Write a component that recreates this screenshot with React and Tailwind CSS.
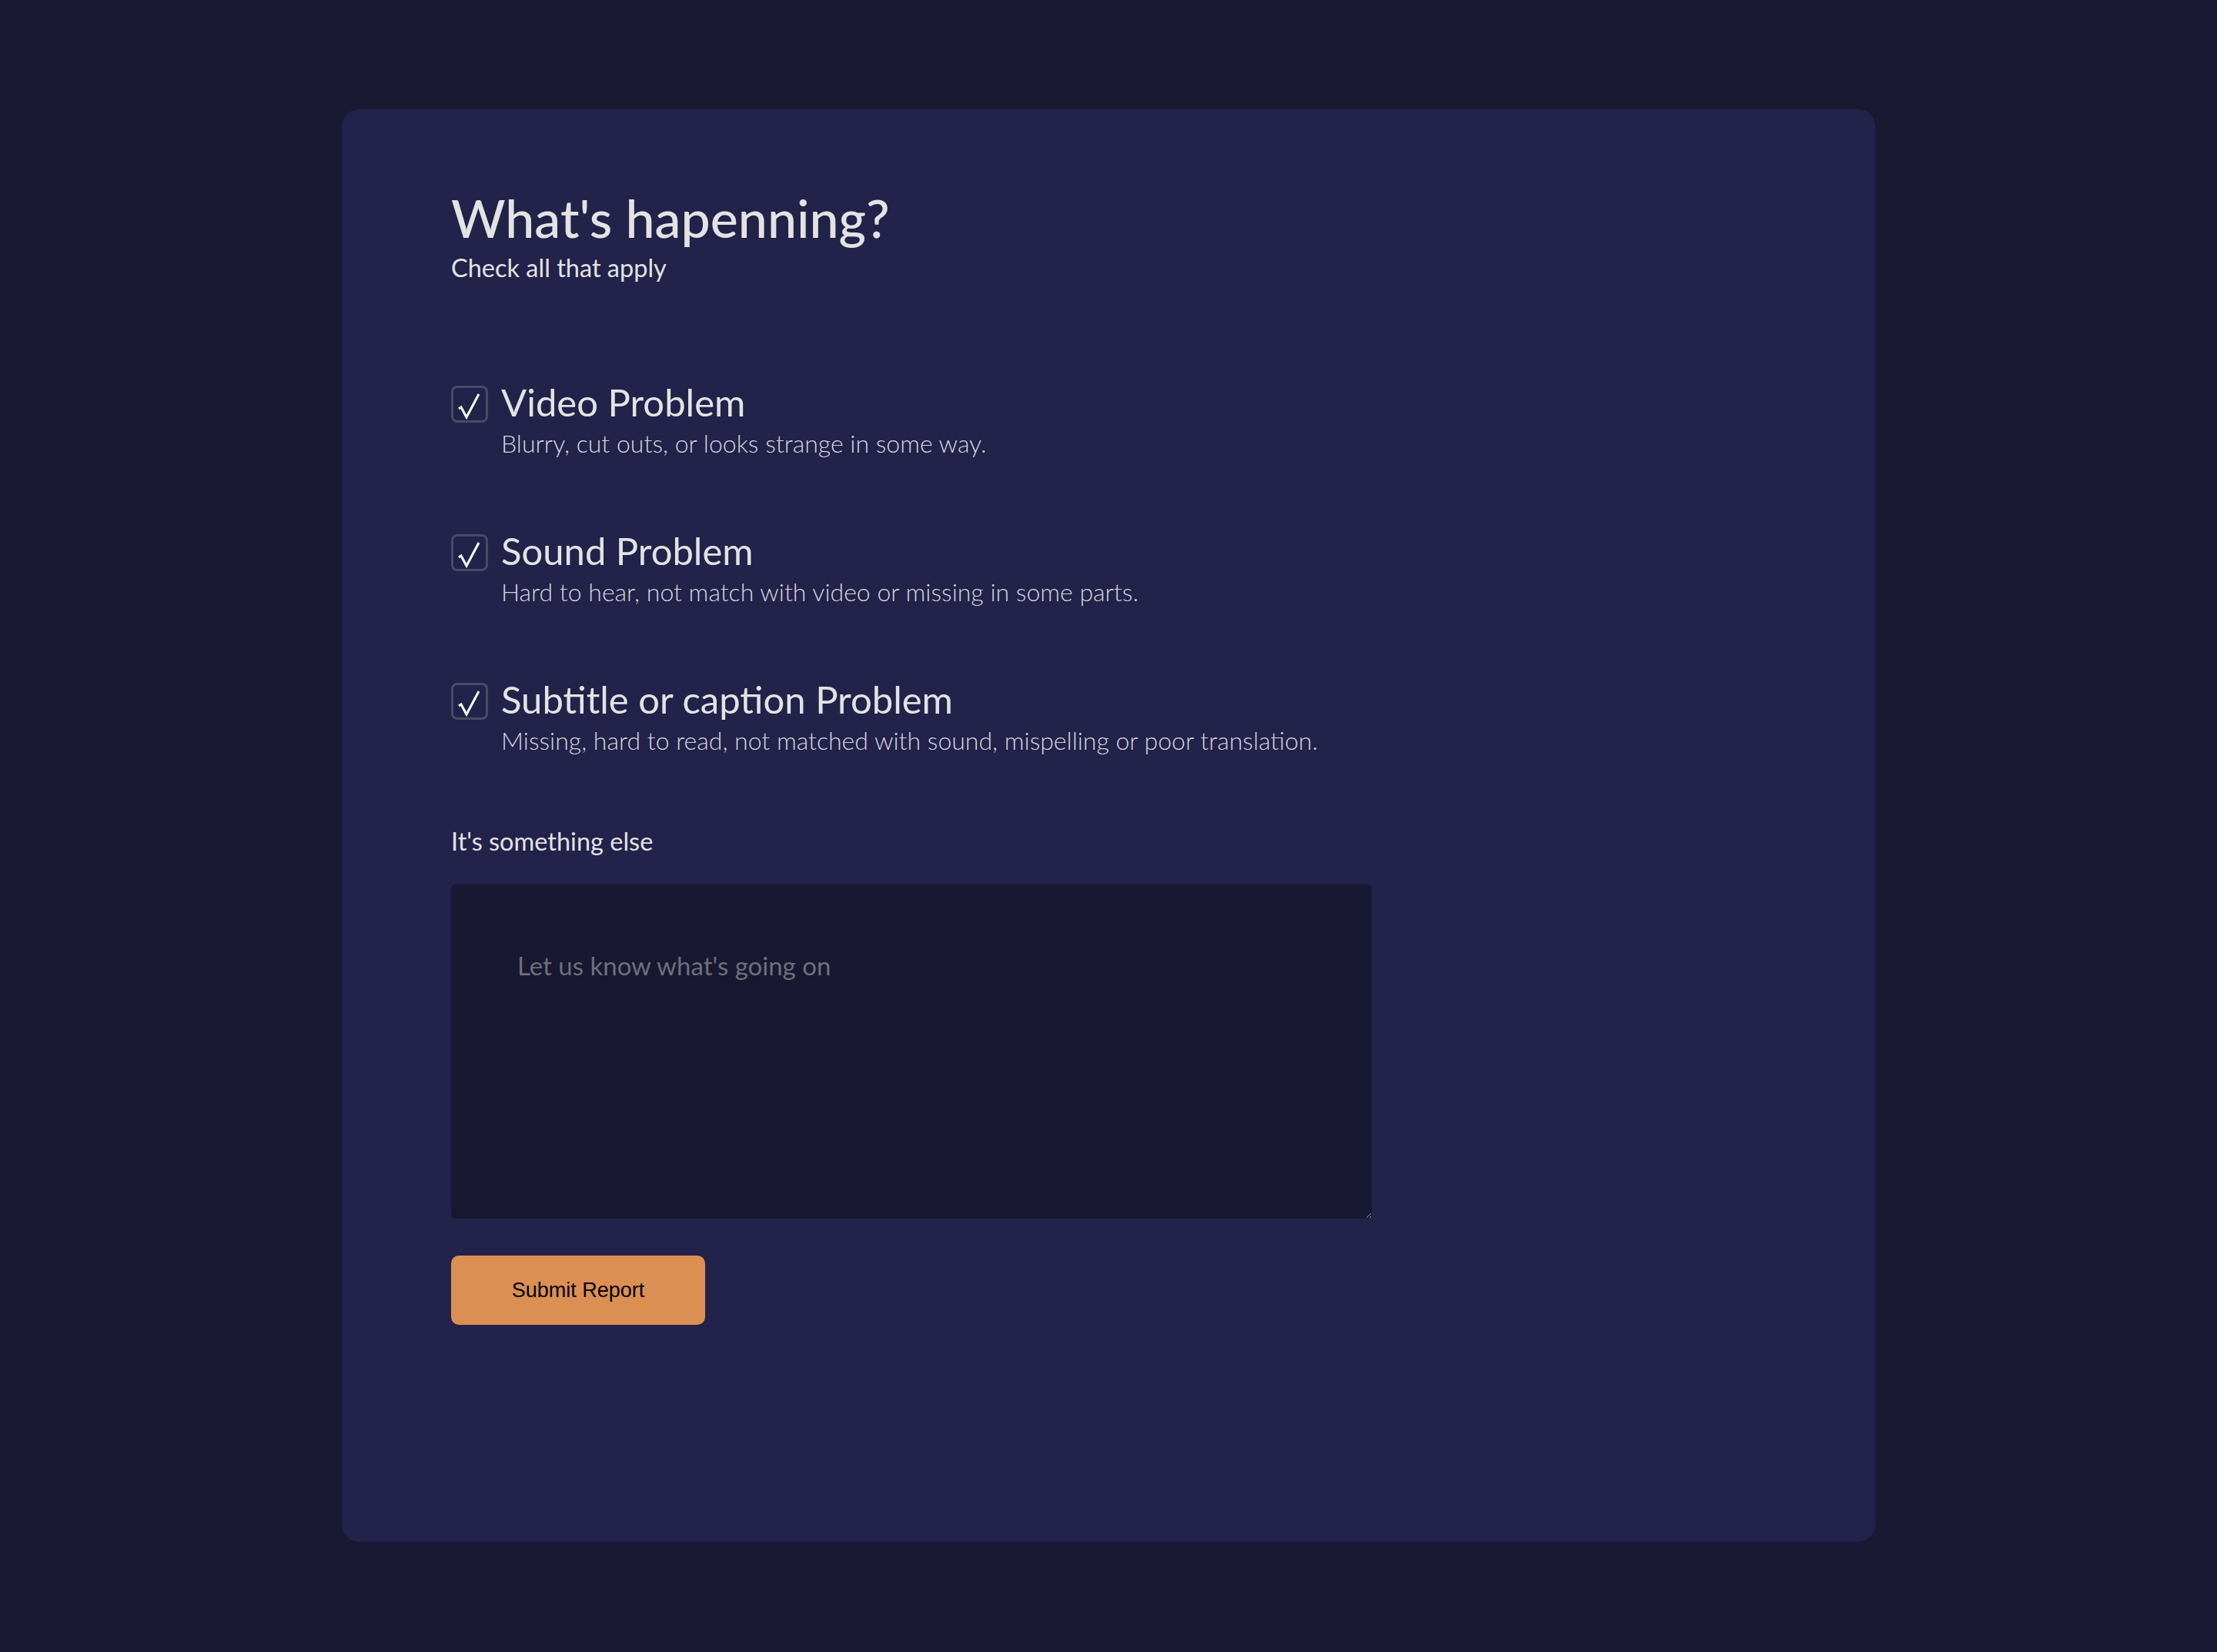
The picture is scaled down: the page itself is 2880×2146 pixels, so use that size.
import React, { useState } from "react";

const problems = [
  {
    id: "video",
    title: "Video Problem",
    desc: "Blurry, cut outs, or looks strange in some way.",
  },
  {
    id: "sound",
    title: "Sound Problem",
    desc: "Hard to hear, not match with video or missing in some parts.",
  },
  {
    id: "subtitle",
    title: "Subtitle or caption Problem",
    desc: "Missing, hard to read, not matched with sound, mispelling or poor translation.",
  },
];

const CheckBox = ({ checked, onToggle }) => (
  <button
    type="button"
    onClick={onToggle}
    className="mt-[7px] w-[48px] h-[48px] shrink-0 rounded-[8px] border-[3px] border-[#4a4a68] bg-[#22224a] flex items-center justify-center"
  >
    {checked && (
      <svg width="48" height="48" viewBox="0 0 48 48" className="-m-[3px]">
        <path
          d="M10 30 L13 28 L20 41 L36 11"
          fill="none"
          stroke="#ffffff"
          strokeWidth="3"
          strokeLinejoin="miter"
        />
      </svg>
    )}
  </button>
);

const App = () => {
  const [checked, setChecked] = useState({ video: true, sound: true, subtitle: true });
  const [text, setText] = useState("");

  const toggle = (id) => setChecked((c) => ({ ...c, [id]: !c[id] }));

  return (
    <div className="min-h-screen bg-[#191933] py-[142px] font-['Lato','Noto_Sans',sans-serif]">
      <div className="mx-auto w-[1992px] rounded-[22px] bg-[#22224a] pt-[102px] pb-[282px] px-[142px] text-[#e3e3e3]">
        <h1 className="text-[68px] leading-[77px] font-medium">What's hapenning?</h1>
        <p className="mt-[9px] text-[32.5px] leading-[36px]">Check all that apply</p>

        <div className="mt-[128px] flex flex-col gap-[92px]">
          {problems.map((p) => (
            <div key={p.id} className="flex items-start gap-[17px]">
              <CheckBox checked={checked[p.id]} onToggle={() => toggle(p.id)} />
              <div>
                <div className="text-[49px] leading-[56px]">{p.title}</div>
                <div className="mt-[7px] text-[32px] leading-[38px] font-light text-[#d6d6de]">
                  {p.desc}
                </div>
              </div>
            </div>
          ))}
        </div>

        <label className="block mt-[94px] text-[32.5px] leading-[36px]">It's something else</label>
        <textarea
          value={text}
          onChange={(e) => setText(e.target.value)}
          placeholder="Let us know what's going on"
          className="block mt-[38px] w-[1196px] h-[434px] rounded-[6px] bg-[#181833] px-[86px] pt-[86px] text-[33px] leading-[38px] text-[#e3e3e3] placeholder:text-[#6f6f7c] outline-none"
        />

        <button
          type="button"
          className="mt-[48px] w-[330px] h-[90px] rounded-[10px] bg-[#dc8f53] text-black text-[27px] font-['Liberation_Sans','Arial',sans-serif]"
        >
          Submit Report
        </button>
      </div>
    </div>
  );
};

export default App;
